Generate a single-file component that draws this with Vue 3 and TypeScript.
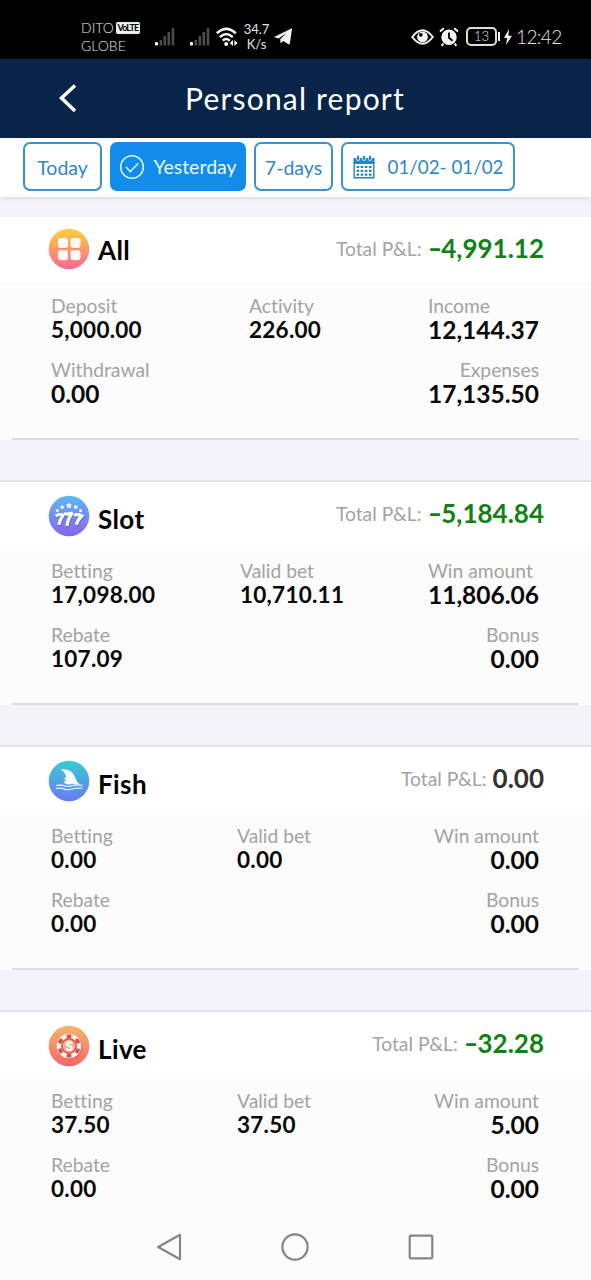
<script setup lang="ts">
type Kind = 'all' | 'slot' | 'fish' | 'live'

interface Field {
  label: string
  value: string
}

interface Card {
  kind: Kind
  title: string
  total: string
  loss: boolean
  fields: [Field, Field, Field]
  extra: [Field, Field]
}

const cards: Card[] = [
  {
    kind: 'all', title: 'All', total: '4,991.12', loss: true,
    fields: [
      { label: 'Deposit', value: '5,000.00' },
      { label: 'Activity', value: '226.00' },
      { label: 'Income', value: '12,144.37' },
    ],
    extra: [{ label: 'Withdrawal', value: '0.00' }, { label: 'Expenses', value: '17,135.50' }],
  },
  {
    kind: 'slot', title: 'Slot', total: '5,184.84', loss: true,
    fields: [
      { label: 'Betting', value: '17,098.00' },
      { label: 'Valid bet', value: '10,710.11' },
      { label: 'Win amount', value: '11,806.06' },
    ],
    extra: [{ label: 'Rebate', value: '107.09' }, { label: 'Bonus', value: '0.00' }],
  },
  {
    kind: 'fish', title: 'Fish', total: '0.00', loss: false,
    fields: [
      { label: 'Betting', value: '0.00' },
      { label: 'Valid bet', value: '0.00' },
      { label: 'Win amount', value: '0.00' },
    ],
    extra: [{ label: 'Rebate', value: '0.00' }, { label: 'Bonus', value: '0.00' }],
  },
  {
    kind: 'live', title: 'Live', total: '32.28', loss: true,
    fields: [
      { label: 'Betting', value: '37.50' },
      { label: 'Valid bet', value: '37.50' },
      { label: 'Win amount', value: '5.00' },
    ],
    extra: [{ label: 'Rebate', value: '0.00' }, { label: 'Bonus', value: '0.00' }],
  },
]

const gradients: Record<Kind, [string, string]> = {
  all: ['#fcd03c', '#f9659b'],
  slot: ['#5cb8f3', '#8a63ec'],
  fish: ['#35cdd3', '#6c79f2'],
  live: ['#f3b76c', '#fb6468'],
}

const chipAngles = [0, 60, 120, 180, 240, 300]
</script>

<template>
  <div class="screen">
    <header class="status">
      <div class="carrier">
        <div class="carrier-row">DITO<span class="volte">VoLTE</span></div>
        <div class="carrier-row">GLOBE</div>
      </div>
      <svg v-for="n in 2" :key="n" class="signal" width="20" height="20" viewBox="0 0 20 20">
        <rect x="0" y="15" width="3" height="3.5" rx="1" fill="#fff" />
        <g fill="#4c4c4c">
          <rect x="4.5" y="13" width="2.6" height="5.5" />
          <rect x="8.5" y="9" width="2.6" height="9.5" />
          <rect x="12.5" y="5" width="2.6" height="13.5" />
          <rect x="16.7" y="1" width="2.6" height="17.5" />
        </g>
      </svg>
      <svg class="wifi" width="22" height="20" viewBox="0 0 22 20">
        <g fill="none" stroke="#f4f4f4" stroke-width="2.6">
          <path d="M.8 6.2Q10.2-2.6 19.8 6.2" />
          <path d="M3.8 10.1Q10.2 3.9 16.8 10.1" />
          <path d="M6.8 13.7Q10.2 10.3 13.8 13.7" />
        </g>
        <circle cx="10.2" cy="17" r="2" fill="#fff" />
        <path d="M17 13v6l-3.2-3zM18.4 13v6l3.2-3z" fill="#fff" />
      </svg>
      <div class="speed"><span>34.7</span><span>K/s</span></div>
      <svg class="plane" width="20" height="19" viewBox="0 0 20 19">
        <path d="M0 10 17.4 1.4Q18.2 1.1 18 2L15.8 16.8Q15.5 18 14.4 17.3L9.4 13.9 6.6 16.2 6.2 12.2 12.5 6 4.6 11.4z" fill="#f4f4f4" />
      </svg>
      <svg class="eye" width="23" height="16" viewBox="0 0 23 16">
        <path d="M1.2 8Q11.5-5.4 21.8 8 11.5 21.4 1.2 8z" fill="none" stroke="#f4f4f4" stroke-width="2" />
        <circle cx="11.5" cy="8" r="5.4" fill="#f4f4f4" />
        <circle cx="9.8" cy="5.8" r="1.9" fill="#000" />
      </svg>
      <svg class="alarm" width="20" height="20" viewBox="0 0 20 20">
        <circle cx="10" cy="10.3" r="7.7" fill="#f4f4f4" />
        <path d="M1 4.6 4.8 1.3M19 4.6 15.2 1.3M4.4 16.5 2.6 19M15.6 16.5 17.4 19" stroke="#f4f4f4" stroke-width="2" />
        <path d="M10 5.4v5.4l3.5 3" fill="none" stroke="#000" stroke-width="1.8" />
      </svg>
      <div class="battery">13</div>
      <svg class="bolt" width="14" height="18" viewBox="0 0 14 18">
        <rect x="0" y="4" width="2" height="9" fill="#f4f4f4" />
        <path d="M11 1 6 10h3.2L8 17 14 7.8h-3.6z" fill="#f4f4f4" />
      </svg>
      <div class="clock">12:42</div>
    </header>

    <nav class="titlebar">
      <svg class="back" width="20" height="32" viewBox="0 0 20 32">
        <path d="M17 2.5 3.5 15 17 28" fill="none" stroke="#fff" stroke-width="3.5" />
      </svg>
      <h1>Personal report</h1>
    </nav>

    <div class="filters">
      <button class="chip today">Today</button>
      <button class="chip yesterday">
        <svg width="26" height="26" viewBox="0 0 26 26" fill="none" stroke="#d9f3ff" stroke-width="1.6">
          <circle cx="13" cy="13" r="11.3" />
          <path d="m7 13 4.3 4.6 8-8.4" />
        </svg>
        <span>Yesterday</span>
      </button>
      <button class="chip week">7-days</button>
      <button class="chip range">
        <svg width="22" height="24" viewBox="0 0 22 24">
          <path d="M1.2 7v15.7h19.6V7" fill="#fff" stroke="#2683bd" stroke-width="1.4" />
          <path d="M.5 3h21v6H.5z" fill="#2087d0" />
          <g fill="#2087d0" stroke="#fff" stroke-width=".8">
            <rect x="3.4" y=".5" width="3.2" height="5" rx="1.4" />
            <rect x="9.4" y=".5" width="3.2" height="5" rx="1.4" />
            <rect x="15.4" y=".5" width="3.2" height="5" rx="1.4" />
          </g>
          <path d="M3.6 12h15M3.6 15.8h15M3.6 19.6h15" stroke="#2683bd" stroke-width="2.2" stroke-dasharray="2.6 1.5" />
        </svg>
        <span>01/02- 01/02</span>
      </button>
    </div>

    <main class="list">
      <section v-for="card in cards" :key="card.kind" class="card" :class="card.kind">
        <div class="head">
          <svg class="badge" width="42" height="42" viewBox="0 0 42 42">
            <defs>
              <linearGradient :id="`g-${card.kind}`" x1="0" y1="0" x2="0" y2="1">
                <stop offset="0" :stop-color="gradients[card.kind][0]" />
                <stop offset="1" :stop-color="gradients[card.kind][1]" />
              </linearGradient>
            </defs>
            <circle cx="21" cy="21" r="20.3" :fill="`url(#g-${card.kind})`" />
            <g v-if="card.kind === 'all'">
              <g fill="#e9835b" opacity=".6">
                <rect x="10" y="11" width="10" height="10" rx="2.4" />
                <rect x="22.5" y="11" width="10" height="10" rx="2.4" />
                <rect x="10" y="23" width="10" height="10" rx="2.4" />
                <rect x="22.5" y="23" width="10" height="10" rx="2.4" />
              </g>
              <g fill="#fffaf5">
                <rect x="10" y="10" width="10" height="10" rx="2.4" />
                <rect x="22.5" y="10" width="10" height="10" rx="2.4" />
                <rect x="10" y="22.2" width="10" height="10" rx="2.4" />
                <rect x="22.5" y="22.2" width="10" height="10" rx="2.4" />
              </g>
            </g>
            <g v-else-if="card.kind === 'slot'">
              <g fill="#e9fbff">
                <path d="m21 7.2 1 2.1 2.3.3-1.7 1.6.4 2.3-2-1.1-2 1.1.4-2.3-1.7-1.6 2.3-.3z" />
                <path d="m14.2 9.7.8 1.3 1.6.3-1.1 1.2.2 1.6-1.5-.7-1.5.7.2-1.6-1.1-1.2 1.6-.3zM27.8 9.7l.8 1.3 1.6.3-1.1 1.2.2 1.6-1.5-.7-1.5.7.2-1.6-1.1-1.2 1.6-.3z" />
                <circle cx="9.4" cy="15.6" r="1.6" /><circle cx="32.6" cy="15.6" r="1.6" />
              </g>
              <path class="seven-shade" d="M8.4 21.8q4-2.6 7.4-.7-3.6 4.4-4.3 9.6M26.6 20.8q4.2-.9 7.8 1-4.4 4-5.3 8.8" />
              <path class="seven" d="M7.8 21q4-2.6 7.4-.7-3.6 4.4-4.3 9.6M26 20q4.2-.9 7.8 1-4.4 4-5.3 8.8" />
              <path class="seven-shade" d="M16.4 19.6q4.4 1 8.8-.8-5 6-5.5 12.8" />
              <path class="seven" d="M15.8 18.8q4.4 1 8.8-.8-5 6-5.5 12.8" />
            </g>
            <g v-else-if="card.kind === 'fish'">
              <path d="M12.5 9.5Q24 8 27.5 18q1.3 4.6 4.7 6.6-5.5.5-8-.8-3.6 2.1-8.7-1.4 2-.7 2.3-2.8l-2.4-1.2 2.7-1Q17.5 12.2 12.5 9.5z" fill="#f3fcff" />
              <g fill="none" stroke="#d9f3ff" stroke-width="1.3">
                <path d="M8 25.7q4-1.4 7.5 0t8 .2 11-.5" />
                <path d="M8 28.6q4-1.2 7.5.3t8 .2 11-.9" />
              </g>
            </g>
            <g v-else>
              <circle cx="21.6" cy="21.8" r="12.5" fill="#d75854" />
              <circle cx="21" cy="21" r="12.3" fill="#fff3e7" />
              <g fill="#d84c4f">
                <rect v-for="a in chipAngles" :key="a" x="18.6" y="9.4" width="4.8" height="3.6" rx=".7" :transform="`rotate(${a} 21 21)`" />
              </g>
              <circle cx="21" cy="21" r="7.2" fill="#f3b293" stroke="#d84c4f" stroke-width="1.5" />
              <path d="M24 18.3q-3.2-1.9-5 0-1.3 1.8 2 2.6 4 .8 2.7 3.2-2 2-5.7-.2" fill="none" stroke="#fff" stroke-width="2" />
            </g>
          </svg>
          <h2>{{ card.title }}</h2>
          <div class="total">
            <span class="total-label">Total P&amp;L:</span>
            <strong :class="{ loss: card.loss }"><span v-if="card.loss" class="minus">-</span>{{ card.total }}</strong>
          </div>
        </div>
        <div class="body">
          <div class="row">
            <div v-for="(f, i) in card.fields" :key="i" class="field" :class="`col-${i}`">
              <span class="label">{{ f.label }}</span>
              <strong class="value">{{ f.value }}</strong>
            </div>
          </div>
          <div class="row">
            <div class="field col-0">
              <span class="label">{{ card.extra[0].label }}</span>
              <strong class="value large-all">{{ card.extra[0].value }}</strong>
            </div>
            <div class="field col-2 end">
              <span class="label">{{ card.extra[1].label }}</span>
              <strong class="value">{{ card.extra[1].value }}</strong>
            </div>
          </div>
        </div>
      </section>
    </main>

    <footer class="softkeys">
      <svg width="26" height="28" viewBox="0 0 26 28"><path d="M2.2 14 24 1.8v24.4z" /></svg>
      <svg width="28" height="28" viewBox="0 0 28 28"><circle cx="14" cy="14" r="12.6" /></svg>
      <svg width="26" height="28" viewBox="0 0 26 28"><rect x="1.7" y="2.7" width="22.6" height="22.6" rx="1" /></svg>
    </footer>
  </div>
</template>

<style>
body {
  margin: 0;
  background: #fcfcfc;
}
</style>

<style scoped>
.screen {
  width: 591px;
  height: 1280px;
  overflow: hidden;
  display: flex;
  flex-direction: column;
  background: #fcfcfc;
  font-family: Lato, "Open Sans", sans-serif;
  font-variant-ligatures: none;
  white-space: nowrap;
}

.screen svg {
  flex: none;
  display: block;
}

.status {
  flex: none;
  height: 59px;
  box-sizing: border-box;
  padding: 14px 0 0 81px;
  display: flex;
  align-items: center;
  background: #000;
  color: #e4e4e4;
}

.carrier {
  width: 74px;
  font-size: 14px;
  font-weight: 300;
  line-height: 18px;
}

.carrier-row {
  display: flex;
  align-items: center;
}

.volte {
  width: 24px;
  height: 12px;
  margin-left: 2px;
  border-radius: 2px;
  background: #eee;
  color: #000;
  font-size: 9px;
  font-weight: 700;
  letter-spacing: -0.8px;
  line-height: 12px;
  text-align: center;
}

.signal { margin-right: 15px; }
.signal + .signal { margin-right: 6px; }
.wifi { margin-right: 5px; }

.speed {
  width: 27px;
  display: flex;
  flex-direction: column;
  align-items: center;
  font-size: 13px;
  line-height: 15px;
}

.plane { margin-left: 4px; }
.eye { margin-left: 117px; }
.alarm { margin-left: 5px; }

.battery {
  width: 31px;
  height: 19px;
  margin-left: 7px;
  box-sizing: border-box;
  border: 2px solid #ddd;
  border-radius: 5px;
  font-size: 13px;
  font-weight: 300;
  line-height: 15px;
  text-align: center;
}

.bolt { margin-left: 1px; }

.clock {
  margin-left: 4px;
  font-size: 19px;
  font-weight: 300;
  letter-spacing: -0.6px;
}

.titlebar {
  flex: none;
  height: 79px;
  display: flex;
  align-items: center;
  background: #092449;
  color: #fff;
}

.back { margin-left: 58px; }

h1 {
  margin: 0 0 2px 107px;
  font-size: 30px;
  font-weight: 400;
  letter-spacing: 1.2px;
  line-height: 40px;
}

.filters {
  flex: none;
  height: 59px;
  box-sizing: border-box;
  padding: 4px 0 0 23px;
  display: flex;
  gap: 8px;
  background: #fff;
  box-shadow: 0 1px 4px rgba(0, 0, 0, 0.12);
  z-index: 1;
}

.chip {
  height: 49px;
  box-sizing: border-box;
  padding: 0;
  display: flex;
  align-items: center;
  justify-content: center;
  border: 2px solid #3b93cb;
  border-radius: 7px;
  background: #fff;
  color: #3187bf;
  font: inherit;
  font-size: 19.5px;
}

.today { width: 79px; padding-top: 2px; }
.week { width: 79px; padding-top: 2px; }

.yesterday {
  width: 136px;
  gap: 8px;
  border-color: #128cea;
  background: #128cea;
  color: #ecf9ff;
}

.range {
  width: 174px;
  gap: 13px;
  font-size: 18.8px;
}

.list {
  flex: none;
  height: 1013px;
  box-sizing: border-box;
  overflow: hidden;
  padding-top: 18px;
  display: flex;
  flex-direction: column;
  gap: 40px;
  background: #f4f3fa;
}

.card {
  flex: none;
  height: 225px;
  position: relative;
  box-sizing: border-box;
  border-top: 2px solid #e3e3e7;
  background: #fcfcfc;
}

.card.all { border-top-color: #f4f3fa; }

.card::after {
  content: "";
  position: absolute;
  right: 12px;
  bottom: 0;
  left: 12px;
  height: 2px;
  background: #dededf;
}

.head {
  height: 65px;
  box-sizing: border-box;
  padding: 0 47px 0 48px;
  display: flex;
  align-items: center;
  background: #fff;
}

.badge { margin-top: 3px; }
.all .badge { margin-top: -1px; }

h2 {
  margin: 8px 0 0 8px;
  font-size: 26px;
  font-weight: 700;
  letter-spacing: 0.4px;
  line-height: 32px;
}

.all h2 { margin-top: 0; }

.total {
  margin: -3px 0 0 auto;
  display: flex;
  align-items: center;
  gap: 6px;
}

.total-label {
  color: #a3a3a3;
  font-size: 19.3px;
}

.total strong {
  color: #333;
  font-size: 26px;
}

.total .loss { color: #128016; }

.minus {
  display: inline-block;
  margin-right: 4px;
  transform: scaleX(1.45);
  transform-origin: left;
}

.body { padding: 12px 52px 0 51px; }

.row {
  height: 64px;
  display: flex;
}

.field {
  display: flex;
  flex-direction: column;
}

.label {
  color: #a3a3a3;
  font-size: 19.3px;
  line-height: 24px;
}

.value {
  color: #080808;
  font-size: 22.5px;
  letter-spacing: 0.25px;
  line-height: 24px;
}

.col-0 { width: 186px; }
.slot .col-0 { width: 189px; }
.all .col-0 { width: 198px; }
.col-2 { margin-left: auto; align-items: flex-end; }

.col-2 .value {
  font-size: 24.5px;
  letter-spacing: 0;
}

.all .col-2:not(.end),
.slot .col-2:not(.end) { align-items: flex-start; }

.all .large-all {
  font-size: 24.5px;
  letter-spacing: 0;
}

.softkeys {
  flex: 1;
  padding: 3px 157px 0 156px;
  display: flex;
  justify-content: space-between;
  align-items: center;
  background: #fcfcfc;
}

.softkeys svg {
  fill: none;
  stroke: #858585;
  stroke-width: 2.2;
  stroke-linejoin: round;
}

.seven,
.seven-shade {
  fill: none;
  stroke: #fff;
  stroke-width: 3.2;
}

.seven-shade { stroke: #6257c5; }
</style>
